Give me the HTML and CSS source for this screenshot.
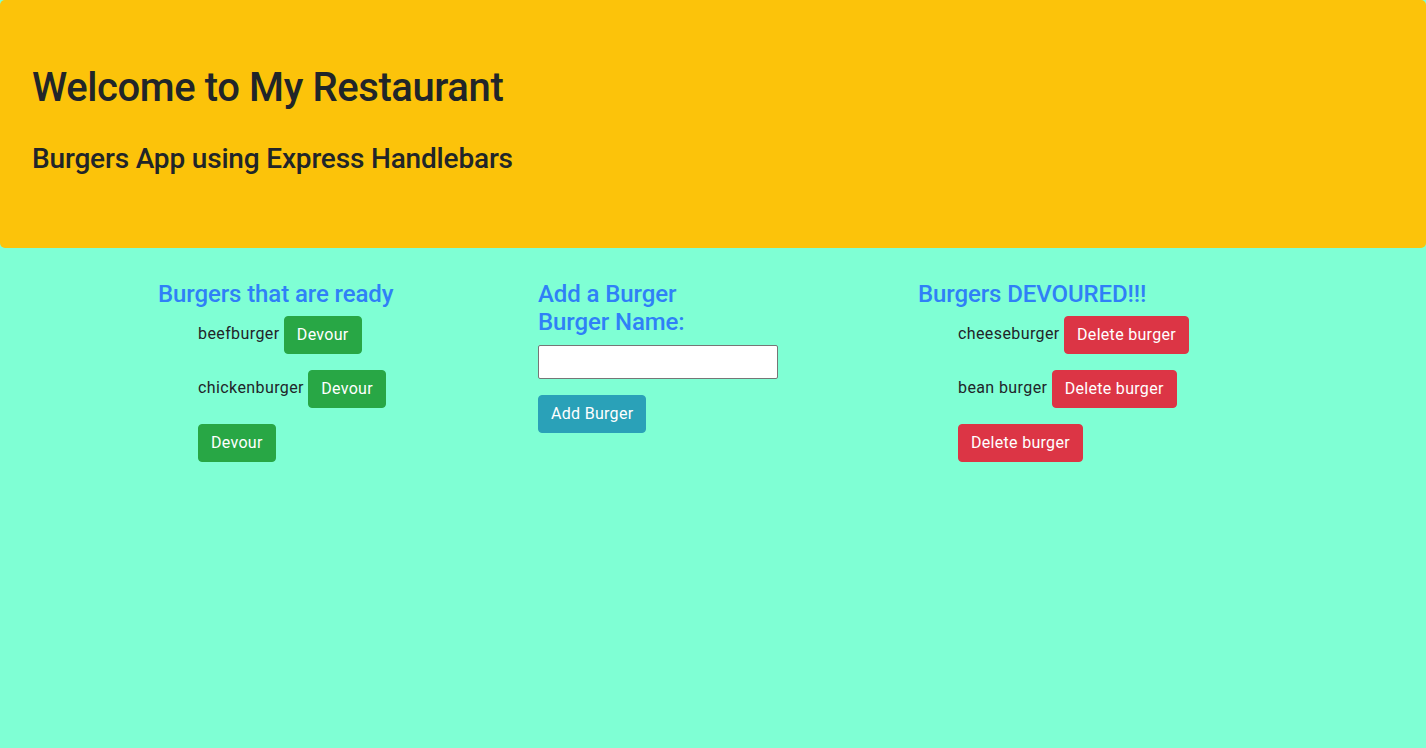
FILE: index.html
```html
<!DOCTYPE html>
<html lang="en">
<head>
<meta charset="utf-8">
<title>Burgers</title>
<link rel="stylesheet" href="styles.css">
</head>
<body>
<header class="jumbotron">
  <h1 class="title">Welcome to My Restaurant</h1>
  <h3 class="subtitle">Burgers App using Express Handlebars</h3>
</header>
<main class="container">
  <section class="col">
    <h4 class="col-heading">Burgers that are ready</h4>
    <ul class="burger-list">
      <li class="burger-item">beefburger <button class="btn btn-success">Devour</button></li>
      <li class="burger-item">chickenburger <button class="btn btn-success">Devour</button></li>
      <li class="burger-item"><button class="btn btn-success">Devour</button></li>
    </ul>
  </section>
  <section class="col">
    <h4 class="col-heading">Add a Burger<br>Burger Name:</h4>
    <form class="add-form">
      <input class="name-input" type="text">
      <button class="btn btn-info" type="button">Add Burger</button>
    </form>
  </section>
  <section class="col">
    <h4 class="col-heading">Burgers DEVOURED!!!</h4>
    <ul class="burger-list">
      <li class="burger-item">cheeseburger <button class="btn btn-danger">Delete burger</button></li>
      <li class="burger-item">bean burger <button class="btn btn-danger">Delete burger</button></li>
      <li class="burger-item"><button class="btn btn-danger">Delete burger</button></li>
    </ul>
  </section>
</main>
</body>
</html>
```

FILE: styles.css
```css
html, body {
  margin: 0;
  padding: 0;
}
body {
  background: #7fffd4;
  color: #212529;
  font-family: Roboto, "Liberation Sans", sans-serif;
  font-size: 16px;
  line-height: 1.5;
  letter-spacing: 0.4px;
  min-height: 748px;
}
.jumbotron {
  background: #fcc30a;
  padding: 64px 32px;
  margin-bottom: 32px;
  border-radius: 5px;
}
.title {
  font-size: 40px;
  font-weight: 500;
  line-height: 1.2;
  letter-spacing: -0.4px;
  margin: 0 0 30px;
}
.subtitle {
  font-size: 28px;
  font-weight: 500;
  line-height: 1.2;
  letter-spacing: -0.17px;
  margin: 0 0 8px;
}
.container {
  width: 1140px;
  margin: 0 auto;
  display: grid;
  grid-template-columns: repeat(3, 1fr);
}
.col {
  padding: 0 15px;
}
.col-heading {
  color: #2f80f7;
  font-size: 24px;
  font-weight: 500;
  line-height: 1.2;
  letter-spacing: -0.1px;
  margin: 0 0 8px;
}
.burger-list {
  list-style: none;
  margin: 0;
  padding-left: 40px;
}
.burger-item {
  margin-bottom: 16px;
}
.btn {
  display: inline-block;
  vertical-align: middle;
  font-family: inherit;
  font-size: 16px;
  line-height: 1.5;
  font-weight: 400;
  letter-spacing: 0.3px;
  padding: 6px 12px;
  border: 1px solid transparent;
  border-radius: 4px;
  color: #fff;
  cursor: pointer;
}
.btn-success {
  background: #28a745;
  border-color: #28a745;
}
.btn-danger {
  background: #dc3545;
  border-color: #dc3545;
}
.btn-info {
  background: #2aa1b8;
  border-color: #2aa1b8;
}
.add-form {
  display: flex;
  flex-direction: column;
  align-items: flex-start;
  gap: 16px;
}
.name-input {
  box-sizing: border-box;
  width: 240px;
  height: 34px;
  margin: 0;
  border: 1px solid #767676;
  border-radius: 2px;
  background: #fff;
  font-family: inherit;
  font-size: 16px;
}
```
